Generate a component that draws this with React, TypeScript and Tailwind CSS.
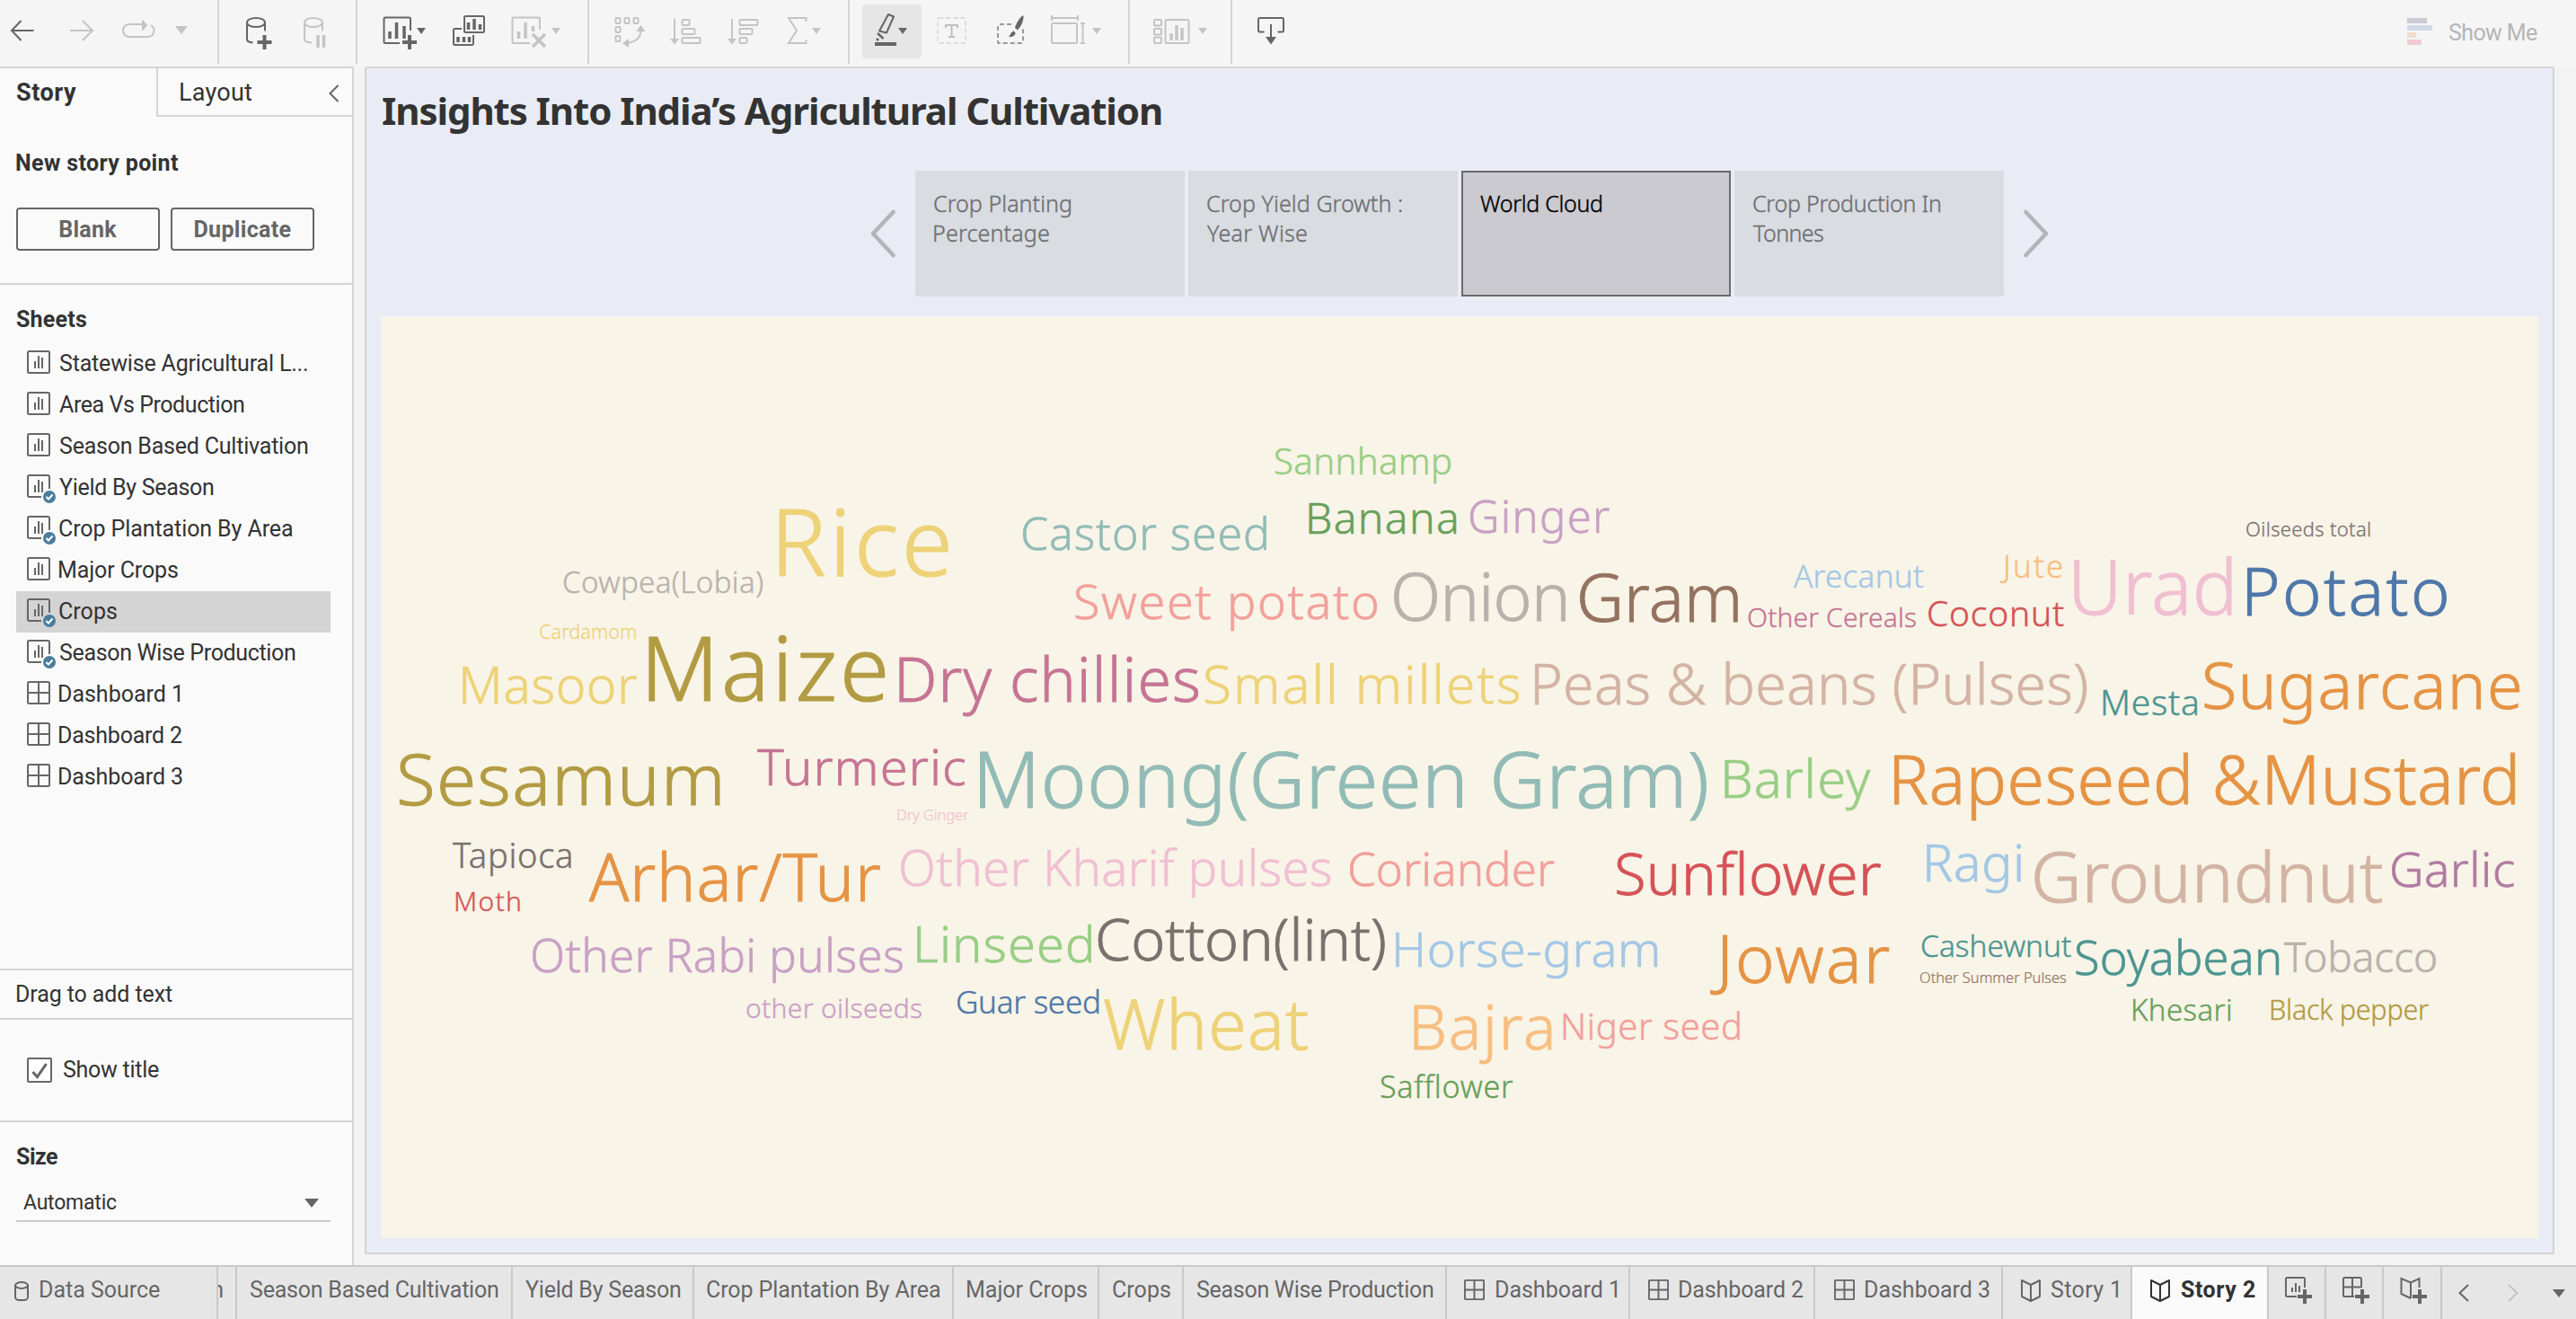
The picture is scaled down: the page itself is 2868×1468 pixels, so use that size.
import React from "react";

const UI = "Roboto";
const CLOUD = "Noto Sans";

const ctx = document.createElement("canvas").getContext("2d")!;

/** Tracking and left bearing that make a run of text span an exact ink width. */
function fit(text: string, size: number, width: number, family: string, weight: number) {
  ctx.font = `${weight} ${size}px "${family}", sans-serif`;
  const m = ctx.measureText(text);
  const ink = m.actualBoundingBoxLeft + m.actualBoundingBoxRight;
  return {
    tracking: text.length > 1 ? (width - ink) / (text.length - 1) : 0,
    bearing: m.actualBoundingBoxLeft,
  };
}

type LabelProps = {
  text: string;
  width: number;
  size?: number;
  weight?: number;
  family?: string;
  className?: string;
};

function Label({ text, width, size = 25, weight = 400, family = UI, className = "" }: LabelProps) {
  const f = fit(text, size, width, family, weight);
  return (
    <span
      className={`block shrink-0 whitespace-nowrap ${className}`}
      style={{
        width,
        fontFamily: `"${family}", sans-serif`,
        fontSize: size,
        fontWeight: weight,
        letterSpacing: f.tracking,
        textIndent: f.bearing,
      }}
    >
      {text}
    </span>
  );
}

/* ---------- toolbar ---------- */

const DARK = "#666666";
const PALE = "#c4c4c4";

function Slot({ x, w, color, children }: { x: number; w: number; color: string; children: React.ReactNode }) {
  return (
    <svg width={w} height={71} viewBox={`${x} 0 ${w} 71`} fill="none" stroke={color} strokeWidth={2} className="shrink-0">
      {children}
    </svg>
  );
}

function Caret({ x, y = 31, w = 10, h = 7, fill }: { x: number; y?: number; w?: number; h?: number; fill: string }) {
  return <path d={`M${x} ${y}h${w}l${-w / 2} ${h}z`} fill={fill} stroke="none" />;
}

function Plus({ x, y, fill = DARK }: { x: number; y: number; fill?: string }) {
  return <path d={`M${x - 8} ${y}h16M${x} ${y - 8}v16`} stroke={fill} strokeWidth={4} />;
}

function Group({ className, children }: { className: string; children?: React.ReactNode }) {
  return <div className={`flex h-[71px] shrink-0 border-r-2 border-[#d4d4d4] ${className}`}>{children}</div>;
}

function Toolbar() {
  return (
    <header className="flex h-[74px] bg-[#f5f5f5]">
      <Group className="w-[244px]">
        <Slot x={0} w={60} color={DARK}>
          <path d="M37.500 34H13M23.500 23L13 34l10.500 11" />
        </Slot>
        <Slot x={60} w={60} color={PALE}>
          <path d="M78 34h25M92 23l11 11-11 11" />
        </Slot>
        <Slot x={120} w={64} color={PALE}>
          <path d="M158 27h-14a7 7 0 0 0 0 14h20a7 7 0 0 0 4-13" />
          <path d="M158 21.500l6.500 6.500-6.500 7z" fill={PALE} stroke="none" />
        </Slot>
        <Slot x={184} w={56} color={PALE}>
          <Caret x={195} y={29} w={14} h={9} fill={PALE} />
        </Slot>
      </Group>
      <Group className="w-[154px]">
        <Slot x={244} w={74} color={DARK}>
          <ellipse cx="285" cy="25" rx="10" ry="5" />
          <path d="M275 25v19c0 2 2 3 6.500 3.500M295 25v9.500" />
          <Plus x={294.5} y={47} />
        </Slot>
        <Slot x={318} w={76} color={PALE}>
          <ellipse cx="349" cy="25" rx="10" ry="5" />
          <path d="M339 25v19c0 2 2 3 8 3.500M359 25v9.500" />
          <path d="M354 39v14M360.500 39v14" strokeWidth={3.5} />
        </Slot>
      </Group>
      <Group className="w-[258px]">
        <Slot x={398} w={92} color={DARK}>
          <path d="M445 48h-16a1.500 1.500 0 0 1-1.500-1.500v-25.500a1.500 1.500 0 0 1 1.500-1.500h26.500a1.500 1.500 0 0 1 1.500 1.500v13" />
          <path d="M434 35v8M441.500 25v18M450 29v14" strokeWidth={3.5} />
          <Plus x={456} y={47} />
          <Caret x={464} fill={DARK} />
        </Slot>
        <Slot x={490} w={70} color={DARK}>
          <rect x="517" y="18" width="22" height="18" rx="1.500" />
          <path d="M514 32h-7.500a1.500 1.500 0 0 0-1.500 1.500v15a1.500 1.500 0 0 0 1.500 1.500h19a1.500 1.500 0 0 0 1.500-1.500v-9.500" />
          <path d="M521.500 25v8M528 21v12M534.500 27v6M510 41v6M516.500 41v6M522.500 41v6" strokeWidth={3.5} />
        </Slot>
        <Slot x={560} w={94} color={PALE}>
          <path d="M590 48h-18a1.500 1.500 0 0 1-1.500-1.500v-25.500a1.500 1.500 0 0 1 1.500-1.500h27.500a1.500 1.500 0 0 1 1.500 1.500v12" />
          <path d="M577.500 35v8M585 25v18M593.500 29v6" strokeWidth={3.5} />
          <path d="M593 38l14 14M607 38l-14 14" strokeWidth={3.5} />
          <Caret x={614} fill={PALE} />
        </Slot>
      </Group>
      <Group className="w-[290px]">
        <Slot x={656} w={74} color={PALE}>
          <rect x="685.500" y="20" width="5" height="6" rx="1" />
          <rect x="695.500" y="20" width="5" height="6" rx="1" />
          <rect x="705.500" y="20" width="5" height="6" rx="1" />
          <rect x="685.500" y="30" width="5" height="6" rx="1" />
          <rect x="685.500" y="40" width="5" height="6" rx="1" />
          <path d="M713.500 33c0 9-6 14-16 15" />
          <path d="M713.500 28l5 7h-10zM693 48l7-5v10z" fill={PALE} stroke="none" />
        </Slot>
        <Slot x={730} w={66} color={PALE}>
          <path d="M751 21v24" />
          <path d="M746 43h10l-5 6.500z" fill={PALE} stroke="none" />
          <rect x="759.500" y="22" width="8" height="6" rx="1" />
          <rect x="759.500" y="32" width="14" height="6" rx="1" />
          <rect x="759.500" y="42" width="20" height="6" rx="1" />
        </Slot>
        <Slot x={796} w={66} color={PALE}>
          <path d="M815 21v24" />
          <path d="M810 43h10l-5 6.500z" fill={PALE} stroke="none" />
          <rect x="823.500" y="22" width="20" height="6" rx="1" />
          <rect x="823.500" y="32" width="14" height="6" rx="1" />
          <rect x="823.500" y="42" width="8" height="6" rx="1" />
        </Slot>
        <Slot x={862} w={76} color={PALE}>
          <path d="M897.500 24v-4h-19.500l9 14-9 14h19.500v-4" />
          <Caret x={904} fill={PALE} />
        </Slot>
      </Group>
      <Group className="w-[312px]">
        <div className="my-[5px] ml-[14px] h-[60px] w-[66px] shrink-0 rounded-sm bg-[#e6e6e6]">
          <svg width={66} height={60} viewBox="960 5 66 60" fill="none" stroke={DARK} strokeWidth={2}>
            <path d="M989 16l6 2.500-8 18-8-2z" strokeLinejoin="round" />
            <path d="M977 37l6.500 6M976 43l2 2" strokeWidth={2.500} />
            <path d="M974 49h24" strokeWidth={4} />
            <Caret x={1000} fill={DARK} />
          </svg>
        </div>
        <Slot x={1026} w={66} color="#dcdcdc">
          <rect x="1044" y="20" width="31" height="28" rx="1.500" strokeDasharray="5 3" />
          <path d="M1053 31v-3h13v3M1059.500 28v13M1056 41h7" stroke="#c0c0c0" />
        </Slot>
        <Slot x={1092} w={66} color={DARK}>
          <path d="M1126 27h-13.500a1.500 1.500 0 0 0-1.500 1.500v18a1.500 1.500 0 0 0 1.500 1.500h25a1.500 1.500 0 0 0 1.500-1.500v-14" stroke="#999999" strokeDasharray="5 3" />
          <path d="M1139.500 17c-3 1-8 8-9.500 14l3 2.500c4-4 7-11 6.500-16.500zM1128.500 34.500l2 2c0 3-3 5-7.500 4.500 2-1.500 2-5 5.500-6.500z" fill={DARK} stroke="none" />
        </Slot>
        <Slot x={1158} w={96} color={PALE}>
          <path d="M1171 20h29M1171 17v6M1200 17v6" />
          <rect x="1171" y="26" width="28" height="22" rx="1.500" />
          <path d="M1205.500 26v22M1203 26h5M1203 48h5" />
          <Caret x={1216} fill={PALE} />
        </Slot>
      </Group>
      <Group className="w-[114px]">
        <Slot x={1258} w={112} color={PALE}>
          <rect x="1285" y="22" width="8" height="6.500" rx="1" />
          <rect x="1285" y="32" width="8" height="6.500" rx="1" />
          <rect x="1285" y="41.500" width="8" height="6.500" rx="1" />
          <rect x="1297.500" y="22" width="26" height="26" rx="1.500" />
          <path d="M1304 37v8M1310 28v17M1316 31v14" strokeWidth={3.5} />
          <Caret x={1334} fill={PALE} />
        </Slot>
      </Group>
      <Slot x={1372} w={80} color={DARK}>
        <path d="M1407.500 35.500h-5a1.500 1.500 0 0 1-1.500-1.500v-12.500a1.500 1.500 0 0 1 1.500-1.500h25a1.500 1.500 0 0 1 1.500 1.500v12.500a1.500 1.500 0 0 1-1.500 1.500h-5M1415 27v16" />
        <path d="M1409 41h12l-6 8.500z" fill={DARK} stroke="none" />
      </Slot>
      <div className="ml-auto mr-[43px] flex pt-[20px]">
        <div className="flex w-[46px] flex-col gap-[2px]">
          <div className="h-[6px] w-[22px] bg-[#ccc8d4]" />
          <div className="h-[6px] w-[28px] bg-[#d0d9e7]" />
          <div className="h-[6px] w-[10px] bg-[#f1dbce]" />
          <div className="h-[6px] w-[16px] bg-[#f2cbd0]" />
        </div>
        <Label text="Show Me" width={99} className="leading-[33px] text-[#b5b5b5]" />
      </div>
    </header>
  );
}

/* ---------- side panel ---------- */

function SheetIcon({ used }: { used?: boolean }) {
  return (
    <svg width={34} height={34} viewBox="0 0 34 34" fill="none" stroke={DARK} strokeWidth={2} className="shrink-0">
      {used ? (
        <path d="M16 25H2.500A1.500 1.500 0 0 1 1 23.500v-21A1.500 1.500 0 0 1 2.500 1h21A1.500 1.500 0 0 1 25 2.500V16" />
      ) : (
        <rect x="1" y="1" width="24" height="24" rx="1.500" />
      )}
      <path d="M9 12v8M13 6v14M17 8v12" />
      {used && (
        <>
          <circle cx="25" cy="25" r="7" fill="#4a7d9c" stroke="none" />
          <path d="M21.500 25l2.500 2.500 4.500-5" stroke="#ffffff" />
        </>
      )}
    </svg>
  );
}

function GridIcon({ size = 26 }: { size?: number }) {
  return (
    <svg width={size} height={size} viewBox="0 0 26 26" fill="none" stroke={DARK} strokeWidth={size > 24 ? 2 : 2.2} className="shrink-0">
      <rect x="1" y="1" width="24" height="24" rx="1.500" />
      <path d="M13 1v24M1 13h24" />
    </svg>
  );
}

const sheets: { name: string; width: number; kind: "sheet" | "used" | "dashboard"; active?: boolean }[] = [
  { name: "Statewise Agricultural L...", width: 276, kind: "sheet" },
  { name: "Area Vs Production", width: 206, kind: "sheet" },
  { name: "Season Based Cultivation", width: 277, kind: "sheet" },
  { name: "Yield By Season", width: 172, kind: "used" },
  { name: "Crop Plantation By Area", width: 260, kind: "used" },
  { name: "Major Crops", width: 132, kind: "sheet" },
  { name: "Crops", width: 64, kind: "used", active: true },
  { name: "Season Wise Production", width: 263, kind: "used" },
  { name: "Dashboard 1", width: 134, kind: "dashboard" },
  { name: "Dashboard 2", width: 137, kind: "dashboard" },
  { name: "Dashboard 3", width: 137, kind: "dashboard" },
];

function SidePanel() {
  return (
    <aside className="flex w-[394px] shrink-0 flex-col border-r-2 border-[#d4d4d4] bg-[#fafafa] text-[#333333]">
      <div className="flex h-[54px] shrink-0">
        <div className="w-[174px] pl-[18px]">
          <Label text="Story" width={67} size={27} weight={700} className="leading-[54px]" />
        </div>
        <div className="flex flex-1 items-start border-b-2 border-l-2 border-[#d4d4d4] pl-[25px]">
          <Label text="Layout" width={79} size={27} className="leading-[54px]" />
          <svg width={12} height={20} viewBox="0 0 12 20" fill="none" stroke={DARK} strokeWidth={2} className="ml-auto mr-[14px] mt-[18px]">
            <path d="M10.500 1L1.500 10l9 9" />
          </svg>
        </div>
      </div>
      <div className="h-[187px] shrink-0 border-b-2 border-[#d4d4d4] pl-[18px] pt-[35px]">
        <Label text="New story point" width={180} weight={700} className="leading-[33px]" />
        <div className="mt-[33px] flex gap-[12px] text-[#666666]">
          <button className="flex h-[48px] w-[160px] items-center justify-center rounded-[4px] border-2 border-[#666666] pt-[2px]">
            <Label text="Blank" width={64} weight={700} />
          </button>
          <button className="flex h-[48px] w-[160px] items-center justify-center rounded-[4px] border-2 border-[#666666] pt-[2px]">
            <Label text="Duplicate" width={107} weight={700} />
          </button>
        </div>
      </div>
      <div className="flex-1 pl-[18px] pt-[22px]">
        <Label text="Sheets" width={78} weight={700} className="h-[43px] leading-[34px]" />
        <ul>
          {sheets.map((s) => (
            <li key={s.name} className={`flex h-[46px] w-[350px] pl-[12px] ${s.active ? "bg-[#d4d4d4]" : ""}`}>
              <div className="w-[36px] pt-[8px]">
                {s.kind === "dashboard" ? <GridIcon /> : <SheetIcon used={s.kind === "used"} />}
              </div>
              <Label text={s.name} width={s.width} className="leading-[46px]" />
            </li>
          ))}
        </ul>
      </div>
      <div className="h-[57px] shrink-0 border-y-2 border-[#d4d4d4] pl-[19px]">
        <Label text="Drag to add text" width={173} className="leading-[53px]" />
      </div>
      <div className="flex h-[114px] shrink-0 items-center gap-[12px] border-b-2 border-[#d4d4d4] pl-[30px]">
        <svg width={28} height={28} viewBox="0 0 28 28" fill="#ffffff" stroke={DARK} strokeWidth={2}>
          <rect x="1" y="1" width="26" height="26" rx="1" />
          <path d="M6.500 16l5 5.500L21.500 7" fill="none" strokeWidth={3} />
        </svg>
        <Label text="Show title" width={107} />
      </div>
      <div className="h-[159px] shrink-0 pl-[18px] pt-[22px]">
        <Label text="Size" width={46} weight={700} className="leading-[34px]" />
        <div className="mt-[7px] flex h-[48px] w-[350px] justify-between border-b-2 border-[#c9c9c9] pl-[8px] pr-[13px]">
          <Label text="Automatic" width={104} size={23} className="leading-[53px]" />
          <svg width={16} height={10} viewBox="0 0 16 10" className="mt-[22px]">
            <path d="M0 0h16l-8 10z" fill={DARK} />
          </svg>
        </div>
      </div>
    </aside>
  );
}

/* ---------- story ---------- */

const points: { lines: [string, number][]; active?: boolean }[] = [
  { lines: [["Crop Planting", 152], ["Percentage", 128]] },
  { lines: [["Crop Yield Growth :", 217], ["Year Wise", 111]] },
  { lines: [["World Cloud", 135]], active: true },
  { lines: [["Crop Production In", 208], ["Tonnes", 78]] },
];

function Arrow({ flip }: { flip?: boolean }) {
  return (
    <svg width={28} height={54} viewBox="0 0 28 54" fill="none" stroke="#b3b4b8" strokeWidth={4.5} strokeLinecap="round" strokeLinejoin="round" className={flip ? "rotate-180" : ""}>
      <path d="M25.500 3L3 27l22.500 24" />
    </svg>
  );
}

/* word, left, ink width, baseline, size, colour */
const words: [string, number, number, number, number, string][] = [
  ["Sannhamp", 1420, 195, 528, 40, "#98ce85"],
  ["Banana", 1457, 164, 594, 48, "#67a05a"],
  ["Ginger", 1637, 155, 593, 49, "#c9a0c5"],
  ["Castor seed", 1139, 271, 612, 50, "#92bbb6"],
  ["Rice", 868, 188, 640.5, 103, "#eed277"],
  ["Oilseeds total", 2501, 138, 597, 22, "#79706e"],
  ["Cowpea(Lobia)", 628, 221, 660, 33, "#b9b1ac"],
  ["Sweet potato", 1197, 336, 689, 54, "#f2a09b"],
  ["Onion", 1552, 191, 690.5, 73, "#b9b1ac"],
  ["Gram", 1759, 176, 691.5, 73, "#957260"],
  ["Arecanut", 1997, 145, 654, 35, "#a3c7e5"],
  ["Jute", 2226, 70, 643, 35, "#f7be80"],
  ["Other Cereals", 1946, 187, 698, 30, "#c67494"],
  ["Coconut", 2147, 151, 697, 39, "#d55256"],
  ["Urad", 2309, 176, 684, 84, "#f1bfd2"],
  ["Potato", 2502, 222, 685, 74, "#4e77a9"],
  ["Cardamom", 601, 107, 711, 21.5, "#eed277"],
  ["Masoor", 515, 194, 783, 57, "#eed277"],
  ["Maize", 723, 262, 779.5, 100, "#b29b42"],
  ["Dry chillies", 1001, 333, 781, 68, "#c67494"],
  ["Small millets", 1342, 349, 783, 58.5, "#eed277"],
  ["Peas & beans (Pulses)", 1709, 614, 784, 62.5, "#d3b4a4"],
  ["Mesta", 2341, 105, 796, 39, "#4b9590"],
  ["Sugarcane", 2454, 351, 789, 72, "#e59344"],
  ["Sesamum", 445, 356, 896, 80, "#b29b42"],
  ["Turmeric", 843, 231, 874, 56, "#c67494"],
  ["Moong(Green Gram)", 1091, 809, 899, 86, "#92bbb6"],
  ["Dry Ginger", 999, 80, 913, 16.5, "#f1bfd2"],
  ["Barley", 1920, 163, 888, 58, "#98ce85"],
  ["Rapeseed &Mustard", 2109, 691, 894.5, 75.5, "#e59344"],
  ["Tapioca", 504, 132, 966, 38, "#79706e"],
  ["Moth", 508, 71, 1014, 30, "#d55256"],
  ["Arhar/Tur", 656, 324, 1003, 73, "#e59344"],
  ["Other Kharif pulses", 1003, 479, 985.5, 54.5, "#f1bfd2"],
  ["Coriander", 1503, 228, 985.5, 51, "#f2a09b"],
  ["Sunflower", 1800, 294, 996, 65, "#d55256"],
  ["Ragi", 2145, 105, 981, 57, "#a3c7e5"],
  ["Groundnut", 2265, 387, 1004, 78, "#d3b4a4"],
  ["Garlic", 2663, 136, 987, 53, "#b07ba1"],
  ["Other Rabi pulses", 593, 412, 1082, 51, "#c9a0c5"],
  ["Linseed", 1021, 194, 1070.5, 56, "#98ce85"],
  ["Cotton(lint)", 1223, 319, 1069, 64.5, "#79706e"],
  ["Horse-gram", 1554, 291, 1076, 54, "#a3c7e5"],
  ["Jowar", 1904, 200, 1093.5, 74, "#e59344"],
  ["Cashewnut", 2140, 166, 1065, 33.5, "#4b9590"],
  ["Other Summer Pulses", 2138, 162, 1094, 16.5, "#957260"],
  ["Soyabean", 2311, 226, 1085, 52.5, "#4b9590"],
  ["Tobacco", 2543, 169, 1082, 46, "#b9b1ac"],
  ["other oilseeds", 831, 195, 1133, 30, "#c9a0c5"],
  ["Guar seed", 1066, 157, 1127.5, 35, "#4e77a9"],
  ["Wheat", 1229, 227, 1168, 77, "#eed277"],
  ["Bajra", 1574, 153, 1168, 68, "#f7be80"],
  ["Niger seed", 1741, 196, 1157, 40, "#f2a09b"],
  ["Khesari", 2375, 109, 1136, 33, "#67a05a"],
  ["Black pepper", 2529, 175, 1135, 30.5, "#b29b42"],
  ["Safflower", 1537, 147, 1222, 34, "#67a05a"],
];

function WordCloud() {
  return (
    <svg width={2402} height={1026} viewBox="424 352 2402 1026" className="block bg-[#f8f4e7]">
      {words.map(([text, x, w, y, size, color]) => {
        const f = fit(text, size, w, CLOUD, 300);
        return (
          <text
            key={text}
            x={x + f.bearing}
            y={y}
            fill={color}
            stroke={color}
            strokeWidth={size * 0.012}
            fontFamily={`"${CLOUD}", sans-serif`}
            fontSize={size}
            fontWeight={300}
            letterSpacing={f.tracking}
          >
            {text}
          </text>
        );
      })}
    </svg>
  );
}

function Story() {
  return (
    <main className="-mt-[2px] ml-[12px] flex h-[1322px] w-[2438px] flex-col rounded-[2px] border-2 border-[#d4d4d4] bg-[#e9ecf5] px-[16px]">
      <h1 className="h-[114px] pl-[2px] pt-[17px] text-[#333333]">
        <Label text="Insights Into India’s Agricultural Cultivation" width={867} size={42} weight={700} family={CLOUD} className="leading-[60px]" />
      </h1>
      <nav className="ml-[545px] flex h-[140px] items-center gap-[22px]">
        <Arrow />
        <div className="flex gap-[4px]">
          {points.map((p, i) => (
            <div
              key={i}
              className={`h-[140px] w-[300px] border-2 pl-[19px] pt-[18px] ${
                p.active ? "border-[#6b6b6b] bg-[#cacad0] text-black" : "border-[#d9dce1] bg-[#d9dce1] text-[#6f7074]"
              }`}
            >
              {p.lines.map(([t, w]) => (
                <Label key={t} text={t} width={w} weight={300} family={CLOUD} className="leading-[33px] [-webkit-text-stroke:0.4px]" />
              ))}
            </div>
          ))}
        </div>
        <Arrow flip />
      </nav>
      <div className="mt-[22px]">
        <WordCloud />
      </div>
    </main>
  );
}

/* ---------- tab bar ---------- */

function BookIcon({ color = DARK }: { color?: string }) {
  return (
    <svg width={24} height={26} viewBox="0 0 24 26" fill="none" stroke={color} strokeWidth={2} strokeLinejoin="round" className="shrink-0">
      <path d="M12 7L2 2v18l10 5 10-5V2zv18" />
    </svg>
  );
}

function Tab({ className, children }: { className: string; children?: React.ReactNode }) {
  return <div className={`flex h-[58px] shrink-0 border-r-2 border-[#c9c9c9] ${className}`}>{children}</div>;
}

function NewTabIcon({ kind }: { kind: "sheet" | "dashboard" | "story" }) {
  return (
    <svg width={32} height={32} viewBox="0 0 32 32" fill="none" stroke={DARK} strokeWidth={2} className="ml-[18px] mt-[11px]">
      {kind === "sheet" && (
        <path d="M13 22H2.500A1.500 1.500 0 0 1 1 20.500v-18A1.500 1.500 0 0 1 2.500 1h18A1.500 1.500 0 0 1 22 2.500V12M8 12v5M12 7v10M16 10v7" />
      )}
      {kind === "dashboard" && (
        <path d="M13 22H2.500A1.500 1.500 0 0 1 1 20.500v-18A1.500 1.500 0 0 1 2.500 1h17A1.500 1.500 0 0 1 21 2.500V12M11 1v21M1 11.500h20" />
      )}
      {kind === "story" && <path d="M12 24L1.500 19V2L12 6.500 21.500 2v10M12 6.500V24" />}
      <Plus x={22} y={22} />
    </svg>
  );
}

function TabBar() {
  const line = "leading-[51px]";
  return (
    <footer className="flex h-[60px] border-t-2 border-[#c9c9c9] bg-[#e6e6e6] text-[#666666]">
      <Tab className="w-[243px] pl-[16px]">
        <svg width={16} height={22} viewBox="0 0 16 22" fill="none" stroke={DARK} strokeWidth={2} className="mr-[13px] mt-[16px]">
          <ellipse cx="8" cy="4.500" rx="7" ry="3.500" />
          <path d="M1 4.500v13c0 2 2 3.500 4 3.500h6c2 0 4-1.500 4-3.500v-13" />
        </svg>
        <Label text="Data Source" width={133} className={line} />
      </Tab>
      <Tab className="w-[21px] justify-end overflow-hidden pr-[13px]">
        <span className={`font-[Roboto] text-[25px] ${line}`}>n</span>
      </Tab>
      <Tab className="w-[307px] pl-[14px]"><Label text="Season Based Cultivation" width={277} className={line} /></Tab>
      <Tab className="w-[202px] pl-[14px]"><Label text="Yield By Season" width={173} className={line} /></Tab>
      <Tab className="w-[289px] pl-[14px]"><Label text="Crop Plantation By Area" width={260} className={line} /></Tab>
      <Tab className="w-[162px] pl-[15px]"><Label text="Major Crops" width={133} className={line} /></Tab>
      <Tab className="w-[94px] pl-[15px]"><Label text="Crops" width={64} className={line} /></Tab>
      <Tab className="w-[293px] pl-[14px]"><Label text="Season Wise Production" width={264} className={line} /></Tab>
      <Tab className="w-[204px] pl-[19px]">
        <div className="mt-[14px] w-[36px]"><GridIcon size={23} /></div>
        <Label text="Dashboard 1" width={134} className={line} />
      </Tab>
      <Tab className="w-[206px] pl-[20px]">
        <div className="mt-[14px] w-[35px]"><GridIcon size={23} /></div>
        <Label text="Dashboard 2" width={138} className={line} />
      </Tab>
      <Tab className="w-[209px] pl-[21px]">
        <div className="mt-[14px] w-[35px]"><GridIcon size={23} /></div>
        <Label text="Dashboard 3" width={138} className={line} />
      </Tab>
      <Tab className="w-[144px] pl-[19px]">
        <div className="mt-[13px] w-[34px]"><BookIcon /></div>
        <Label text="Story 1" width={75} className={line} />
      </Tab>
      <Tab className="w-[152px] bg-[#fafafa] pl-[19px] text-[#333333]">
        <div className="mt-[13px] w-[35px]"><BookIcon color="#333333" /></div>
        <Label text="Story 2" width={83} weight={700} className={line} />
      </Tab>
      <Tab className="w-[64px]"><NewTabIcon kind="sheet" /></Tab>
      <Tab className="w-[64px]"><NewTabIcon kind="dashboard" /></Tab>
      <Tab className="w-[65px]"><NewTabIcon kind="story" /></Tab>
      <svg width={149} height={58} viewBox="2719 1410 149 58" fill="none" strokeWidth={2}>
        <path d="M2748 1430l-9.500 9 9.500 9" stroke={DARK} />
        <path d="M2793 1430l9.500 9-9.500 9" stroke={PALE} />
        <path d="M2842 1435h14l-7 9z" fill={DARK} />
      </svg>
    </footer>
  );
}

export default function App() {
  return (
    <div className="flex h-[1468px] w-[2868px] flex-col overflow-hidden bg-[#f3f3f3]">
      <Toolbar />
      <div className="flex h-[1334px] shrink-0 border-t-2 border-transparent">
        <div className="-mt-[2px] flex border-t-2 border-[#d4d4d4]">
          <SidePanel />
        </div>
        <Story />
      </div>
      <TabBar />
    </div>
  );
}
